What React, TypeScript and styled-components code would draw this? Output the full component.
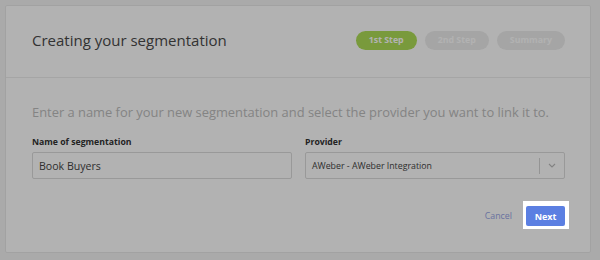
import * as React from 'react';
import styled, { createGlobalStyle } from 'styled-components';

const GlobalStyle = createGlobalStyle`
  html, body {
    margin: 0;
    padding: 0;
    background: #f4f4f4;
    font-family: 'Open Sans', 'Liberation Sans', sans-serif;
  }
  * {
    box-sizing: border-box;
  }
`;

const Page = styled.div`
  width: 600px;
  height: 260px;
  padding: 5px 9px 7px 5px;
  overflow: hidden;
`;

const Card = styled.div`
  height: 248px;
  background: #fff;
  border: 1px solid #e9e9e9;
  border-radius: 2px;
  display: flex;
  flex-direction: column;
`;

const Header = styled.div`
  height: 72px;
  display: flex;
  align-items: center;
  justify-content: space-between;
  padding: 0 25px 3px 26px;
  border-bottom: 1px solid #ededed;
`;

const Title = styled.h1`
  margin: 0;
  font-size: 15px;
  font-weight: 400;
  color: #4a4a4a;
`;

const Steps = styled.div`
  display: flex;
  gap: 8px;
`;

const StepPill = styled.span<{ $active?: boolean }>`
  height: 19px;
  padding: 0 13px;
  border-radius: 10px;
  display: inline-flex;
  align-items: center;
  font-size: 8.8px;
  font-weight: 700;
  color: #fff;
  background: ${(p) => (p.$active ? '#aedd56' : '#ededed')};
`;

const Body = styled.div`
  flex: 1;
  padding: 26px 25px 0 26px;
  display: flex;
  flex-direction: column;
`;

const Intro = styled.p`
  margin: 0 0 16px;
  font-size: 12.9px;
  line-height: 16px;
  font-weight: 400;
  color: #bdbdbd;
  white-space: nowrap;
`;

const Fields = styled.div`
  display: grid;
  grid-template-columns: 260px 260px;
  column-gap: 13px;
`;

const Field = styled.div`
  display: flex;
  flex-direction: column;
`;

const Label = styled.label`
  font-size: 8.7px;
  line-height: 12px;
  font-weight: 700;
  color: #333;
  margin-bottom: 4px;
`;

const TextInput = styled.div`
  height: 27px;
  border: 1px solid #dcdcdc;
  border-radius: 2px;
  padding: 0 6px;
  display: flex;
  align-items: center;
  font-size: 10.6px;
  color: #444;
`;

const Select = styled.div`
  height: 27px;
  border: 1px solid #dcdcdc;
  border-radius: 2px;
  display: flex;
  align-items: center;
  font-size: 8.8px;
  color: #444;
`;

const SelectValue = styled.span`
  flex: 1;
  padding: 0 6px;
`;

const SelectArrow = styled.span`
  width: 25px;
  height: 16px;
  border-left: 1px solid #d4d4d4;
  display: flex;
  align-items: center;
  justify-content: center;
  color: #bbb;
`;

const Footer = styled.div`
  display: flex;
  justify-content: flex-end;
  align-items: center;
  gap: 11px;
  margin-top: 22px;
  margin-right: -4px;
`;

const CancelLink = styled.a`
  font-size: 8.8px;
  color: #96a5e6;
  text-decoration: none;
  margin-top: 2px;
`;

const Spotlight = styled.div`
  position: relative;
  z-index: 10;
  background: #fff;
  padding: 5px 4px 3px 3px;
  box-shadow: 0 0 0 1200px rgba(0, 0, 0, 0.3);
  display: flex;
`;

const PrimaryButton = styled.button`
  height: 20px;
  width: 39px;
  border: none;
  border-radius: 2px;
  background: #5b7fe2;
  color: #fff;
  font-family: inherit;
  font-size: 9px;
  font-weight: 700;
  padding: 0;
`;

const App = () => (
  <>
    <GlobalStyle />
    <Page>
      <Card>
        <Header>
          <Title>Creating your segmentation</Title>
          <Steps>
            <StepPill $active>1st Step</StepPill>
            <StepPill>2nd Step</StepPill>
            <StepPill>Summary</StepPill>
          </Steps>
        </Header>
        <Body>
          <Intro>Enter a name for your new segmentation and select the provider you want to link it to.</Intro>
          <Fields>
            <Field>
              <Label>Name of segmentation</Label>
              <TextInput>Book Buyers</TextInput>
            </Field>
            <Field>
              <Label>Provider</Label>
              <Select>
                <SelectValue>AWeber - AWeber Integration</SelectValue>
                <SelectArrow>
                  <svg width="8" height="5" viewBox="0 0 8 5" fill="none">
                    <path d="M1 1l3 3 3-3" stroke="currentColor" strokeWidth="1.1" />
                  </svg>
                </SelectArrow>
              </Select>
            </Field>
          </Fields>
          <Footer>
            <CancelLink href="#">Cancel</CancelLink>
            <Spotlight>
              <PrimaryButton>Next</PrimaryButton>
            </Spotlight>
          </Footer>
        </Body>
      </Card>
    </Page>
  </>
);

export default App;
